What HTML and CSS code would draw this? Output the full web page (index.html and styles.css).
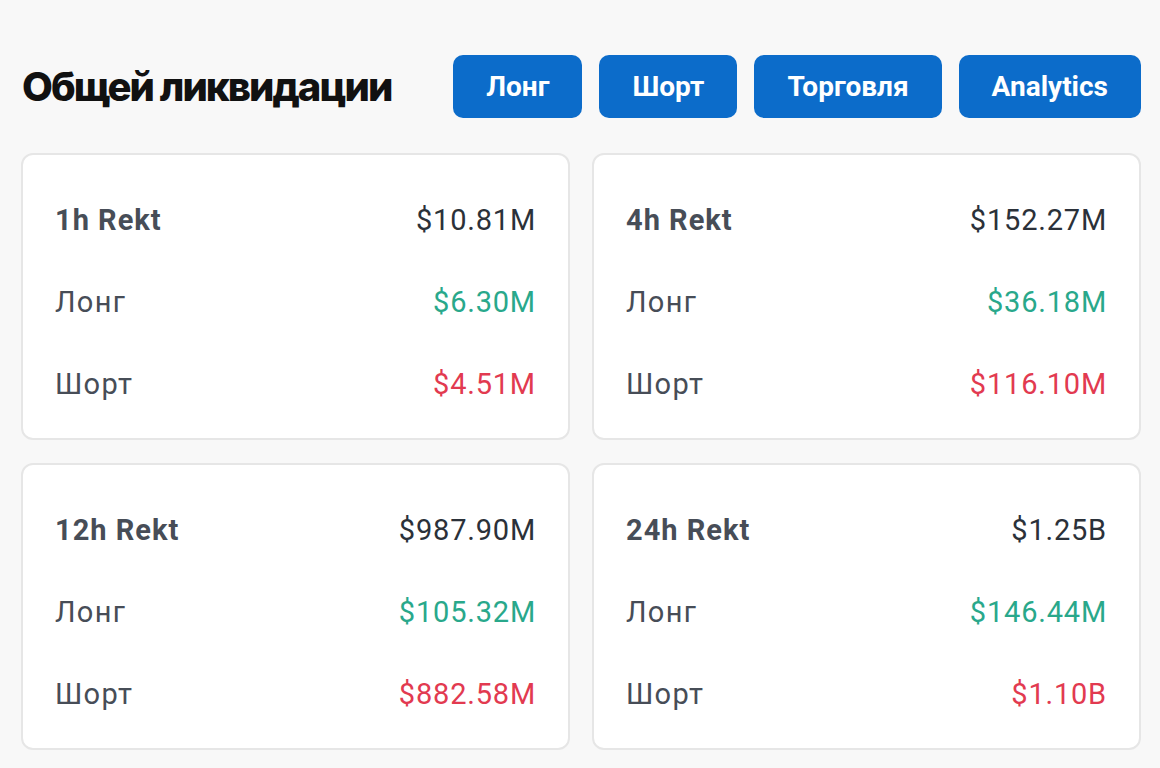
FILE: index.html
```html
<!DOCTYPE html>
<html lang="ru">
<head>
    <meta charset="UTF-8">
    <meta name="viewport" content="width=device-width, initial-scale=1.0">
    <title>Общей ликвидации</title>
    <link rel="stylesheet" href="styles.css">
</head>
<body>

<div class="page">
    <div class="header">
        <h1>Общей ликвидации</h1>
        <div class="tabs">
            <button class="tab">Лонг</button>
            <button class="tab">Шорт</button>
            <button class="tab">Торговля</button>
            <button class="tab">Analytics</button>
        </div>
    </div>

    <div class="grid">
        <div class="card">
            <div class="row"><span class="label title">1h Rekt</span><span class="value">$10.81M</span></div>
            <div class="row"><span class="label">Лонг</span><span class="value long">$6.30M</span></div>
            <div class="row"><span class="label">Шорт</span><span class="value short">$4.51M</span></div>
        </div>
        <div class="card">
            <div class="row"><span class="label title">4h Rekt</span><span class="value">$152.27M</span></div>
            <div class="row"><span class="label">Лонг</span><span class="value long">$36.18M</span></div>
            <div class="row"><span class="label">Шорт</span><span class="value short">$116.10M</span></div>
        </div>
        <div class="card">
            <div class="row"><span class="label title">12h Rekt</span><span class="value">$987.90M</span></div>
            <div class="row"><span class="label">Лонг</span><span class="value long">$105.32M</span></div>
            <div class="row"><span class="label">Шорт</span><span class="value short">$882.58M</span></div>
        </div>
        <div class="card">
            <div class="row"><span class="label title">24h Rekt</span><span class="value">$1.25B</span></div>
            <div class="row"><span class="label">Лонг</span><span class="value long">$146.44M</span></div>
            <div class="row"><span class="label">Шорт</span><span class="value short">$1.10B</span></div>
        </div>
    </div>
</div>

</body>
</html>
```

FILE: styles.css
```css
* {
    box-sizing: border-box;
    margin: 0;
    padding: 0;
}
body {
    font-family: Roboto, "Liberation Sans", sans-serif;
    background-color: #f8f8f8;
    color: #1e2329;
}
.page {
    padding: 55px 19px 0 21px;
}
.header {
    display: flex;
    align-items: center;
    justify-content: space-between;
}
.header h1 {
    font-family: Inter, sans-serif;
    font-size: 40px;
    font-weight: 800;
    letter-spacing: -2px;
    color: #111;
    padding-left: 1px;
}
.tabs {
    display: flex;
    gap: 17px;
}
.tab {
    height: 63px;
    padding: 0 33px;
    background-color: #0c6cca;
    color: #fff;
    border: none;
    border-radius: 10px;
    font-family: Roboto, sans-serif;
    font-size: 28px;
    font-weight: 700;
    cursor: pointer;
}
.grid {
    display: grid;
    grid-template-columns: 1fr 1fr;
    gap: 23px 22px;
    margin-top: 35px;
}
.card {
    background-color: #fff;
    border: 2px solid #e6e6e6;
    border-radius: 12px;
    padding: 24px 32px 13px 32px;
}
.row {
    display: flex;
    align-items: center;
    justify-content: space-between;
    height: 82px;
}
.label {
    font-size: 29px;
    color: #474d57;
    letter-spacing: 1.3px;
}
.label.title {
    font-weight: 700;
    letter-spacing: 1px;
}
.value {
    font-size: 29px;
    letter-spacing: 0.8px;
    color: #2b3139;
}
.value.long {
    color: #29a88b;
}
.value.short {
    color: #e23a50;
}
```
